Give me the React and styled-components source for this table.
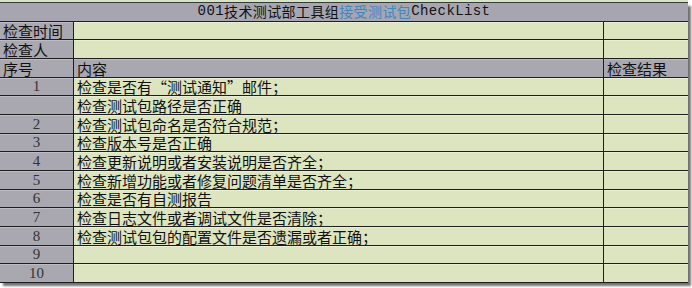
import styled, { createGlobalStyle } from "styled-components";

const GlobalStyle = createGlobalStyle`
  html, body {
    margin: 0;
    padding: 0;
    background: #ffffff;
  }
`;

const Page = styled.div`
  width: 692px;
  height: 288px;
  overflow: hidden;
  font-family: "Noto Sans CJK SC", sans-serif;
  color: #111;
  -webkit-font-smoothing: antialiased;
`;

const TopStrip = styled.div`
  height: 3px;
  width: 688px;
  background: #d4e4c6;
  border-bottom: 1px solid #3a3a3a;
  box-sizing: border-box;
`;

const Sheet = styled.div`
  display: grid;
  grid-template-columns: 74px 530px 84px;
  grid-template-rows: repeat(15, 1fr);
  width: 688px;
  height: 280px;
  box-shadow: 3px 3px 2px rgba(0, 0, 0, 0.55);
`;

const TitleCell = styled.div`
  grid-column: 1 / 4;
  background: #a7a6b0;
  border-bottom: 1.5px solid #1e1e1e;
  display: flex;
  align-items: center;
  justify-content: center;
  font-size: 14px;
  line-height: 15px;
  letter-spacing: 0.4px;
  min-height: 0;
`;

const Blue = styled.span`
  color: #3f86c4;
`;

const Latin = styled.span`
  font-family: "Liberation Mono", "Noto Sans CJK SC", monospace;
  font-size: 14px;
  color: #111;
`;

const Cell = styled.div`
  background: ${(p) => (p.$grey ? "#a9a8b1" : "#dce5c0")};
  border-bottom: 1.5px solid #1e1e1e;
  border-right: ${(p) => (p.$last ? "none" : "1.5px solid #1e1e1e")};
  box-shadow: inset 0 1px 0 ${(p) => (p.$grey ? "#bdbcc4" : "#e9efd6")};
  display: flex;
  align-items: center;
  justify-content: ${(p) => (p.$center ? "center" : "flex-start")};
  padding: 1px 0 0 ${(p) => (p.$center ? "0" : "3px")};
  font-size: 15px;
  line-height: 15px;
  white-space: nowrap;
  min-height: 0;
  box-sizing: border-box;
`;

const Num = styled.span`
  font-family: "Liberation Serif", "Noto Sans CJK SC", serif;
  font-size: 15px;
  color: #333;
`;

const items = [
  { no: "1", text: "检查是否有“测试通知”邮件；" },
  { no: "", text: "检查测试包路径是否正确" },
  { no: "2", text: "检查测试包命名是否符合规范；" },
  { no: "3", text: "检查版本号是否正确" },
  { no: "4", text: "检查更新说明或者安装说明是否齐全；" },
  { no: "5", text: "检查新增功能或者修复问题清单是否齐全；" },
  { no: "6", text: "检查是否有自测报告" },
  { no: "7", text: "检查日志文件或者调试文件是否清除；" },
  { no: "8", text: "检查测试包包的配置文件是否遗漏或者正确；" },
  { no: "9", text: "" },
  { no: "10", text: "" },
];

export default function App() {
  return (
    <Page lang="zh-CN">
      <GlobalStyle />
      <TopStrip />
      <Sheet>
        <TitleCell>
          <Latin>001</Latin>
          <span>技术测试部工具组</span>
          <Blue>接受测试包</Blue>
          <Latin>CheckList</Latin>
        </TitleCell>

        <Cell $grey>检查时间</Cell>
        <Cell />
        <Cell $last />

        <Cell $grey>检查人</Cell>
        <Cell />
        <Cell $last />

        <Cell $grey>序号</Cell>
        <Cell $grey>内容</Cell>
        <Cell $grey $last>检查结果</Cell>

        {items.map((it, i) => [
          <Cell key={`n${i}`} $grey $center>
            <Num>{it.no}</Num>
          </Cell>,
          <Cell key={`t${i}`}>{it.text}</Cell>,
          <Cell key={`r${i}`} $last />,
        ])}
      </Sheet>
    </Page>
  );
}
